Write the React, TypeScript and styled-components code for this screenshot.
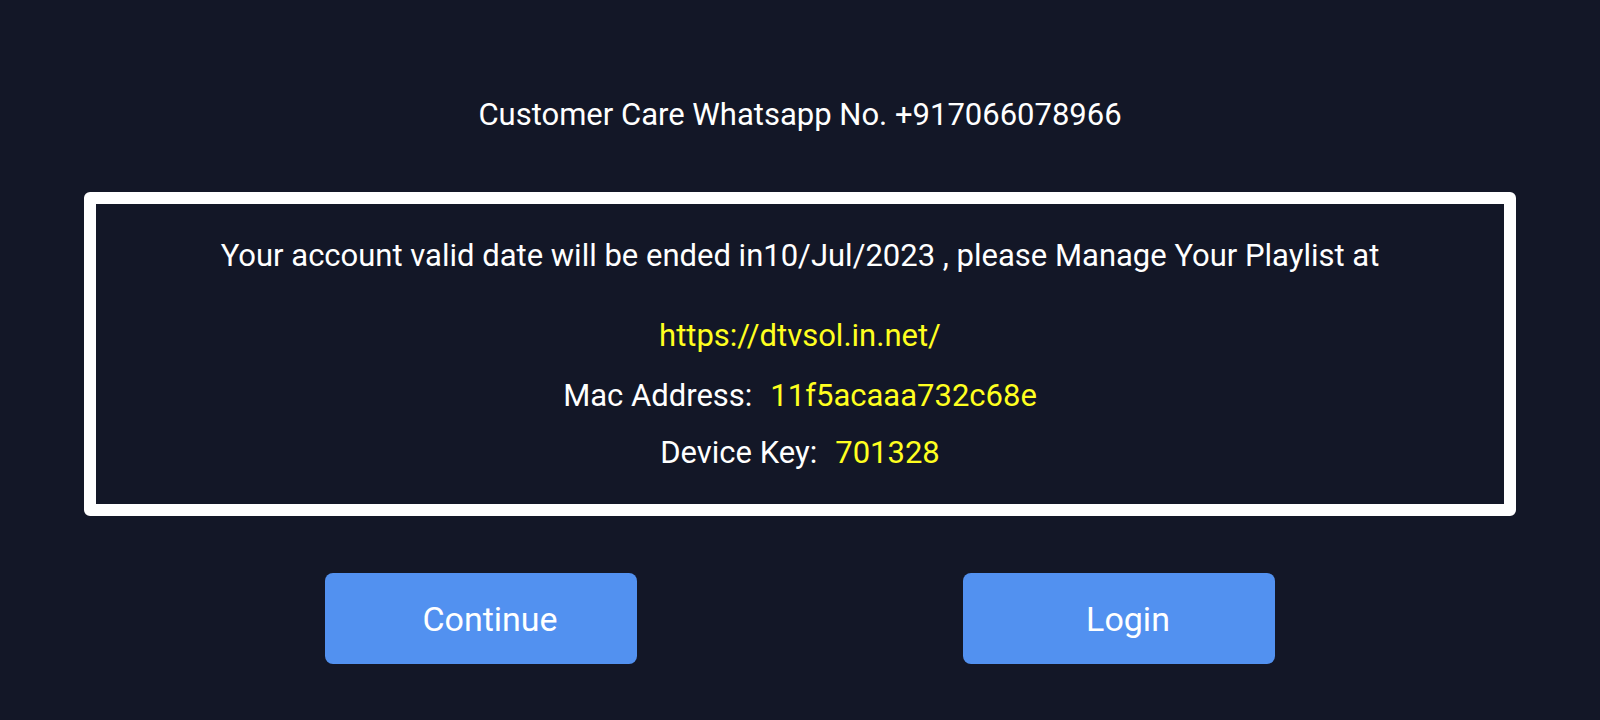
import React from 'react';
import styled, { createGlobalStyle } from 'styled-components';

const GlobalStyle = createGlobalStyle`
  html, body {
    margin: 0;
    padding: 0;
    background-color: #131727;
  }

  body {
    font-family: Roboto, 'Liberation Sans', sans-serif;
    color: #ffffff;
  }
`;

const Screen = styled.div`
  min-height: 100vh;
  display: flex;
  flex-direction: column;
  align-items: center;
  padding-top: 97px;
  box-sizing: border-box;
`;

const SupportLine = styled.p`
  margin: 0;
  font-size: 31px;
  line-height: 36px;
  color: #ffffff;
`;

const InfoBox = styled.div`
  width: 1432px;
  margin-top: 59px;
  box-sizing: border-box;
  border: 12px solid #ffffff;
  border-radius: 6px;
  padding: 34px 20px 33px;
  display: flex;
  flex-direction: column;
  align-items: center;
`;

const Notice = styled.p`
  margin: 0;
  font-size: 31px;
  line-height: 36px;
`;

const InfoRow = styled.p<{ $gap: number }>`
  margin: ${(p) => p.$gap}px 0 0;
  font-size: 31px;
  line-height: 36px;
  display: flex;
  gap: 18px;
`;

const Highlight = styled.span`
  color: #ffff1f;
`;

const ButtonRow = styled.div`
  display: flex;
  justify-content: center;
  gap: 326px;
  margin-top: 57px;
`;

const ActionButton = styled.button`
  width: 312px;
  height: 91px;
  border: none;
  border-radius: 8px;
  padding: 0 0 0 18px;
  background-color: #5291f0;
  color: #ffffff;
  font-family: Roboto, 'Liberation Sans', sans-serif;
  font-size: 34px;
  cursor: pointer;
`;

const App: React.FC = () => {
  return (
    <>
      <GlobalStyle />
      <Screen>
        <SupportLine>Customer Care Whatsapp No. +917066078966</SupportLine>
        <InfoBox>
          <Notice>
            Your account valid date will be ended in10/Jul/2023 , please Manage Your Playlist at
          </Notice>
          <InfoRow $gap={44}>
            <Highlight>https://dtvsol.in.net/</Highlight>
          </InfoRow>
          <InfoRow $gap={24}>
            <span>Mac Address:</span>
            <Highlight>11f5acaaa732c68e</Highlight>
          </InfoRow>
          <InfoRow $gap={21}>
            <span>Device Key:</span>
            <Highlight>701328</Highlight>
          </InfoRow>
        </InfoBox>
        <ButtonRow>
          <ActionButton>Continue</ActionButton>
          <ActionButton>Login</ActionButton>
        </ButtonRow>
      </Screen>
    </>
  );
};

export default App;
